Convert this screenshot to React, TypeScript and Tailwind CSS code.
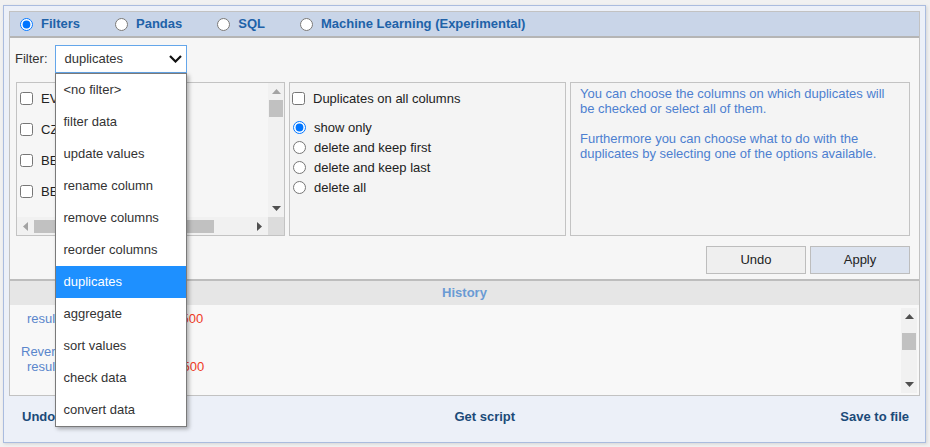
import React from 'react';

const filters = [
  '<no filter>',
  'filter data',
  'update values',
  'rename column',
  'remove columns',
  'reorder columns',
  'duplicates',
  'aggregate',
  'sort values',
  'check data',
  'convert data',
];

const columns = ['EVENT_ID', 'CZ_NAME', 'BEGIN_DATE', 'BEGIN_TIME'];

const Arrow: React.FC<{ dir: 'up' | 'down' | 'left' | 'right'; dark?: boolean }> = ({ dir, dark }) => {
  const fill = dark ? '#505050' : '#a3a3a3';
  if (dir === 'up' || dir === 'down') {
    return (
      <svg width="9" height="5" viewBox="0 0 9 5">
        <polygon points={dir === 'up' ? '4.5,0 9,5 0,5' : '0,0 9,0 4.5,5'} fill={fill} />
      </svg>
    );
  }
  return (
    <svg width="5" height="9" viewBox="0 0 5 9">
      <polygon points={dir === 'left' ? '5,0 5,9 0,4.5' : '0,0 5,4.5 0,9'} fill={fill} />
    </svg>
  );
};

const VScroll: React.FC<{ upDark?: boolean; thumbTop: string; className?: string }> = ({ upDark, thumbTop, className }) => (
  <div className={`flex flex-col w-[16px] bg-[#f1f1f1] ${className ?? ''}`}>
    <div className="h-[17px] flex items-center justify-center shrink-0">
      <Arrow dir="up" dark={upDark} />
    </div>
    <div className="flex-1 px-[1px]">
      <div className={`h-[17px] bg-[#c1c1c1] ${thumbTop}`} />
    </div>
    <div className="h-[17px] flex items-center justify-center shrink-0">
      <Arrow dir="down" dark />
    </div>
  </div>
);

const App: React.FC = () => {
  return (
    <div className="w-[930px] h-[447px] overflow-hidden bg-[#f1f1f1] pt-[5px] pl-[3px] font-['Liberation_Sans',Arial,sans-serif] text-[13px] text-[#222]">
      <div className="w-[923px] h-[438px] border border-[#aabcdf] bg-[#ecf0f8] p-[5px] flex flex-col shadow-[1px_1px_3px_rgba(0,0,0,0.12)]">
        <div className="h-[385px] border border-[#c2c2c2] flex flex-col shrink-0">
          {/* mode tabs */}
          <div className="h-[26px] shrink-0 bg-[#c9d5e8] border-b-2 border-[#b5b5b5] flex items-center pl-[10px] gap-[35px] font-bold text-[#2062a8]">
            {['Filters', 'Pandas', 'SQL', 'Machine Learning (Experimental)'].map((t, i) => (
              <label key={t} className="flex items-center gap-[8px]">
                <input type="radio" name="mode" defaultChecked={i === 0} className="m-0 w-[13px] h-[13px]" />
                <span>{t}</span>
              </label>
            ))}
          </div>

          {/* filter content */}
          <div className="h-[241px] shrink-0 bg-[#f6f6f6] flex flex-col">
            <div className="flex items-center pt-[7px] pl-[5px] gap-[7px] text-[#333]">
              <span>Filter:</span>
              <div className="relative w-[132px] h-[28px] z-10">
                <div className="w-full h-full border border-[#64a6ea] bg-white flex items-center justify-between pl-[9px] pr-[4px]">
                  <span>duplicates</span>
                  <svg width="13" height="8" viewBox="0 0 13 8">
                    <polyline points="1,1 6.5,6.5 12,1" fill="none" stroke="#111" strokeWidth="2.2" />
                  </svg>
                </div>
                <div className="absolute top-[28px] left-0 w-[132px] bg-white border border-[#7a7a7a] shadow-[2px_2px_4px_rgba(0,0,0,0.3)]">
                  {filters.map((f) => (
                    <div
                      key={f}
                      className={`h-[32px] flex items-center pl-[8px] ${
                        f === 'duplicates' ? 'bg-[#1e90ff] text-white' : 'text-[#333]'
                      }`}
                    >
                      {f}
                    </div>
                  ))}
                </div>
              </div>
            </div>

            <div className="flex gap-[4px] pl-[6px] mt-[9px] h-[154px]">
              {/* column list */}
              <div className="w-[269px] border border-[#c3c3c3] flex flex-col">
                <div className="flex h-[134px]">
                  <div className="flex-1 pl-[3px]">
                    {columns.map((c) => (
                      <label key={c} className="h-[31px] flex items-center gap-[8px]">
                        <input type="checkbox" className="m-0 w-[13px] h-[13px]" />
                        <span>{c}</span>
                      </label>
                    ))}
                  </div>
                  <VScroll thumbTop="mt-0" />
                </div>
                <div className="flex flex-1">
                  <div className="flex-1 flex items-center bg-[#f1f1f1]">
                    <div className="w-[17px] flex justify-center">
                      <Arrow dir="left" />
                    </div>
                    <div className="w-[180px] h-[13px] bg-[#c1c1c1]" />
                    <div className="flex-1" />
                    <div className="w-[17px] flex justify-center">
                      <Arrow dir="right" dark />
                    </div>
                  </div>
                  <div className="w-[16px] bg-[#dcdcdc]" />
                </div>
              </div>

              {/* options */}
              <div className="w-[277px] border border-[#c3c3c3] bg-[#f4f4f4] pl-[2px] pt-[6px]">
                <label className="flex items-center gap-[8px]">
                  <input type="checkbox" className="m-0 w-[13px] h-[13px]" />
                  <span>Duplicates on all columns</span>
                </label>
                <div className="mt-[9px] pl-[1px]">
                  {['show only', 'delete and keep first', 'delete and keep last', 'delete all'].map((o, i) => (
                    <label key={o} className="h-[20px] flex items-center gap-[8px]">
                      <input type="radio" name="dup" defaultChecked={i === 0} className="m-0 w-[13px] h-[13px]" />
                      <span>{o}</span>
                    </label>
                  ))}
                </div>
              </div>

              {/* help */}
              <div className="w-[340px] border border-[#c3c3c3] bg-[#f4f4f4] px-[9px] pt-[3px] leading-[15px] text-[#4d7fd0]">
                <p>
                  You can choose the columns on which duplicates will
                  <br />
                  be checked or select all of them.
                </p>
                <p className="mt-[15px]">
                  Furthermore you can choose what to do with the
                  <br />
                  duplicates by selecting one of the options available.
                </p>
              </div>
            </div>

            <div className="flex justify-end gap-[4px] pr-[9px] mt-[10px]">
              <button className="w-[100px] h-[28px] border border-[#bdbdbd] bg-[#efefef] text-[#222]">Undo</button>
              <button className="w-[100px] h-[28px] border border-[#bdbdbd] bg-[#dce3ef] text-[#222]">Apply</button>
            </div>
          </div>

          {/* history */}
          <div className="h-[26px] shrink-0 border-t-2 border-[#bdbdbd] bg-[#e6e6e6] flex items-center justify-center font-bold text-[#6a9bd4]">
            History
          </div>
          <div className="flex-1 bg-[#f8f8f8] flex">
            <div className="flex-1 pt-[6px] leading-[15px] text-[#5a86cc]">
              <div className="pl-[17px]">
                <span className="inline-block w-[141px]">result: rows</span>
                <span className="text-[#ef3a24]">11500</span>
              </div>
              <div className="mt-[18px] pl-[11px]">Reversed</div>
              <div className="pl-[17px]">
                <span className="inline-block w-[141px]">result: rows</span>
                <span className="text-[#ef3a24]">12500</span>
              </div>
            </div>
            <VScroll upDark thumbTop="mt-[8px]" className="mt-[3px] mb-[2px] mr-[2px]" />
          </div>
        </div>

        {/* footer */}
        <div className="flex-1 flex items-center pl-[13px] pr-[11px] font-bold text-[#1b4a78]">
          <span>Undo</span>
          <span className="flex-1 text-center pl-[74px]">Get script</span>
          <span>Save to file</span>
        </div>
      </div>
    </div>
  );
};

export default App;
